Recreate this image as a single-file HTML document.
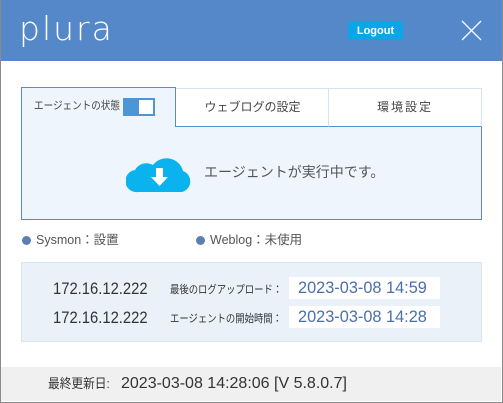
<!DOCTYPE html>
<html><head><meta charset="utf-8"><style>
*{margin:0;padding:0;box-sizing:border-box}
body{width:503px;height:403px;background:#fff;position:relative;overflow:hidden;font-family:"Liberation Sans","Noto Sans CJK JP",sans-serif;color:#444}
.a{position:absolute}
.n{transform-origin:0 50%;white-space:nowrap}
</style></head><body>
<div class="a" style="left:0;top:0;width:503px;height:403px;border:1px solid #8a8a8a;border-top:none"></div>
<div class="a" style="left:1px;top:0;width:501px;height:61px;background:#5588c8"></div>
<div class="a" style="left:19px;top:12px;color:#fff;font-size:33px;letter-spacing:2px;line-height:34px;font-family:'DejaVu Sans',sans-serif;font-weight:200">plura</div>
<div class="a" style="left:348px;top:22px;width:55px;height:18px;background:#0aa6e8;border-radius:2px;color:#fff;font-weight:bold;font-size:11px;text-align:center;line-height:18px">Logout</div>
<svg class="a" style="left:461px;top:20px" width="21" height="21"><path d="M1 1L20 20M20 1L1 20" stroke="#fff" stroke-width="1.3"/></svg>
<div class="a" style="left:21px;top:126px;width:461px;height:94px;background:#eef5fd;border:1px solid #5b8bc6"></div>
<div class="a" style="left:21px;top:87px;width:155px;height:40px;background:#eef5fd;border:1px solid #5b8bc6;border-bottom:none"></div>
<div class="a" style="left:176px;top:88px;width:153px;height:39px;background:#fff;border:1px solid #d6e4ef;border-left:none;border-bottom:1px solid #5b8bc6"></div>
<div class="a" style="left:328px;top:88px;width:154px;height:39px;background:#fff;border:1px solid #d6e4ef;border-bottom:1px solid #5b8bc6"></div>
<div class="a n" style="left:34px;top:99px;font-size:11px;line-height:14px;transform:scaleX(0.87)">エージェントの状態</div>
<div class="a" style="left:123px;top:98px;width:32px;height:18px;background:#4a96d6"></div>
<div class="a" style="left:139px;top:100px;width:14px;height:14px;background:#fff"></div>
<div class="a" style="left:176px;top:99px;width:153px;text-align:center;font-size:12px;line-height:16px">ウェブログの設定</div>
<div class="a" style="left:328px;top:99px;width:154px;text-align:center;font-size:12px;line-height:16px;letter-spacing:2px">環境設定</div>
<svg class="a" style="left:126px;top:151px" width="68" height="42"><path d="M12 41 A11 11 0 0 1 9 19 A13 13 0 0 1 27 14 A17 17 0 0 1 57 20 A11 11 0 0 1 56 41 Z" fill="#0ab2ee"/><path d="M30 17h7v9h5l-8.5 9-8.5-9h5z" fill="#fff"/></svg>
<div class="a" style="left:204px;top:162px;font-size:14px;line-height:20px;color:#555">エージェントが実行中です。</div>
<div class="a" style="left:22px;top:236px;width:9px;height:9px;border-radius:50%;background:#5b80b0"></div>
<div class="a" style="left:36px;top:232px;font-size:12.5px;line-height:16px;color:#555">Sysmon：設置</div>
<div class="a" style="left:196px;top:236px;width:9px;height:9px;border-radius:50%;background:#5b80b0"></div>
<div class="a" style="left:210px;top:232px;font-size:12.5px;line-height:16px;color:#555">Weblog：未使用</div>
<div class="a" style="left:21px;top:262px;width:461px;height:80px;background:#ebf1f9;border:1px solid #d8e6f3"></div>
<div class="a n" style="left:53px;top:279px;font-size:17px;line-height:20px;color:#333;transform:scaleX(0.87)">172.16.12.222</div>
<div class="a n" style="left:53px;top:308px;font-size:17px;line-height:20px;color:#333;transform:scaleX(0.87)">172.16.12.222</div>
<div class="a n" style="left:170px;top:283px;font-size:11px;line-height:14px;color:#333;transform:scaleX(0.85)">最後のログアップロード：</div>
<div class="a n" style="left:170px;top:312px;font-size:11px;line-height:14px;color:#333;transform:scaleX(0.85)">エージェントの開始時間：</div>
<div class="a" style="left:289px;top:277px;width:151px;height:22px;background:#fff"></div>
<div class="a" style="left:289px;top:306px;width:151px;height:22px;background:#fff"></div>
<div class="a n" style="left:298px;top:277px;color:#4a70a8;font-size:17px;line-height:22px;transform:scaleX(0.96)">2023-03-08 14:59</div>
<div class="a n" style="left:298px;top:306px;color:#4a70a8;font-size:17px;line-height:22px;transform:scaleX(0.96)">2023-03-08 14:28</div>
<div class="a" style="left:1px;top:367px;width:500px;height:34px;background:#f0f0f0"></div>
<div class="a n" style="left:48px;top:374px;font-size:13px;line-height:20px;color:#333;transform:scaleX(0.9)">最終更新日:</div>
<div class="a n" style="left:121px;top:374px;font-size:16px;line-height:20px;color:#333">2023-03-08 14:28:06 [V 5.8.0.7]</div>
</body></html>
